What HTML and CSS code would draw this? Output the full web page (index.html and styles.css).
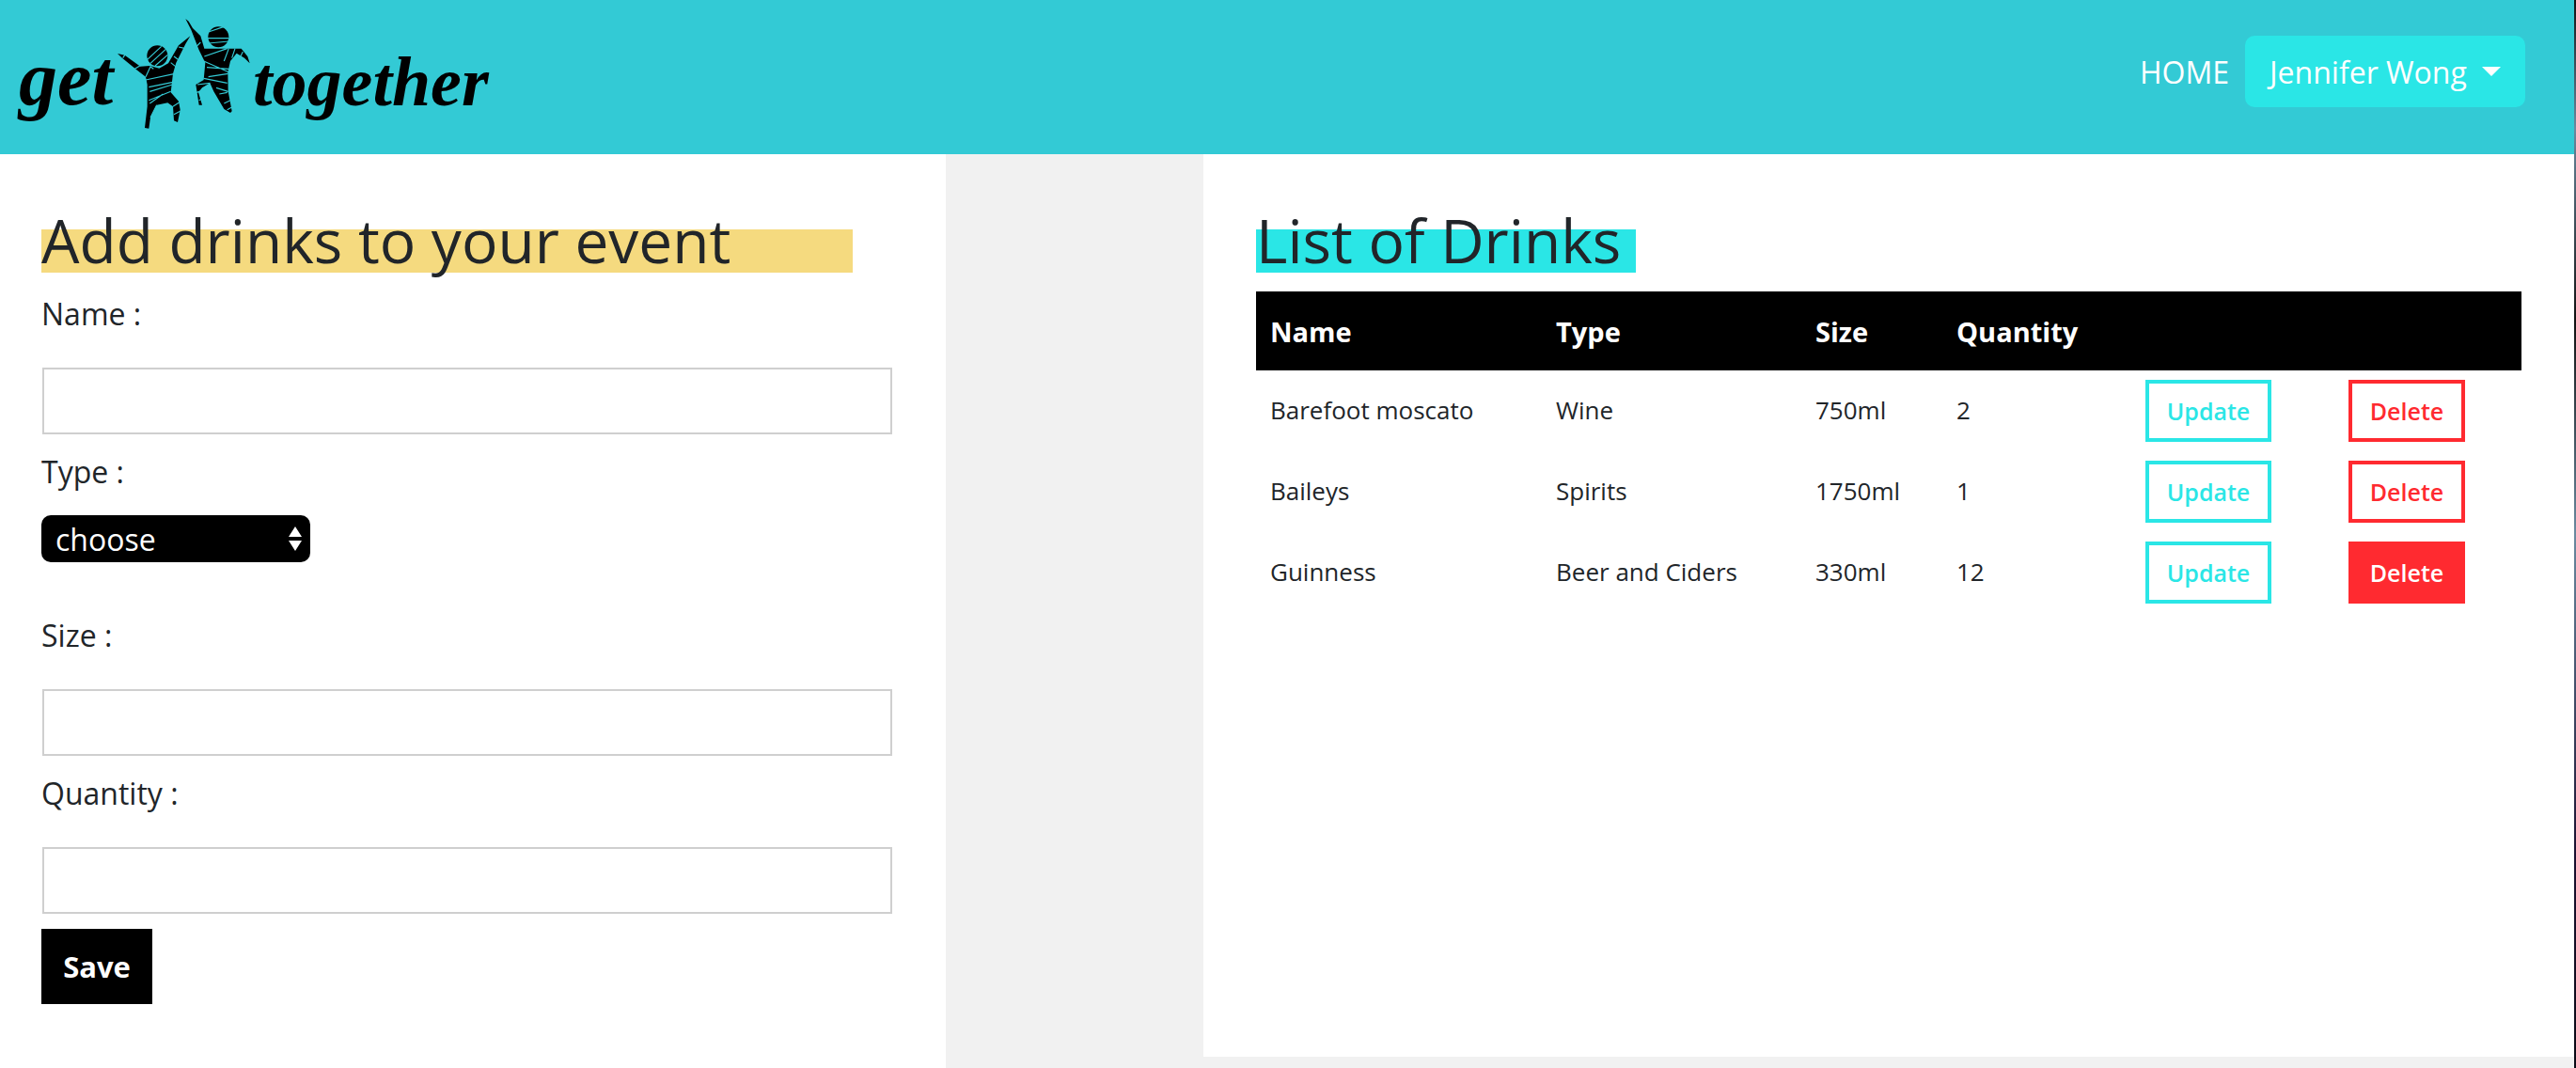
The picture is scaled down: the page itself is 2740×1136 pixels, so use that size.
FILE: index.html
```html
<!DOCTYPE html>
<html lang="en">
<head>
    <meta charset="UTF-8">
    <title>Get Together - Drinks</title>
    <link rel="stylesheet" href="styles.css">
</head>
<body>
    <div class="screen">
        <div class="app">
            <header class="topbar">
                <a class="logo" href="#home">
                    <span class="logo-word logo-get">get</span>
                    <svg class="logo-figures" viewBox="0 0 540 420" aria-hidden="true">
                        <g fill="#000">
                            <circle cx="172" cy="148" r="33"/>
                            <path d="M45 141 68 146 118 182 148 180 178 188 207 172 240 115 277 85 262 110 232 170 222 205 215 265 240 293 245 320 237 360 225 355 222 310 205 298 170 305 150 345 145 380 132 378 140 310 140 240 135 215 105 192 60 155Z"/>
                            <circle cx="367" cy="88" r="33"/>
                            <path d="M262 30 272 38 285 60 310 85 322 125 370 125 415 125 440 125 460 150 467 172 450 155 425 140 405 165 397 200 398 262 410 325 405 330 385 318 352 262 340 235 315 250 303 265 315 305 305 305 295 240 320 225 325 170 305 130 280 65Z"/>
                        </g>
                        <g class="logo-cuts">
                            <path d="M140 160 185 118M150 172 198 128M165 180 205 145"/>
                            <path d="M62 155 72 140M100 190 120 178M135 215 150 183 160 190"/>
                            <path d="M135 225 228 205M145 248 222 232M148 262 220 240M145 290 215 262M148 300 190 270M150 345 170 305M222 310 245 295M225 335 245 325"/>
                            <path d="M215 170 240 190M225 150 245 165M240 120 262 125"/>
                            <path d="M335 72 385 55M333 92 400 92M335 108 400 102"/>
                            <path d="M310 105 285 130M322 150 395 125M320 165 400 200M330 185 400 190M320 220 395 235M335 215 398 205"/>
                            <path d="M400 125 385 165M420 125 410 155M445 135 435 155M300 240 340 235M297 265 318 258M305 290 315 285"/>
                            <path d="M360 250 398 262M370 270 395 265M385 300 405 290M395 320 410 312"/>
                        </g>
                    </svg>
                    <span class="logo-word logo-together">together</span>
                </a>
                <nav class="topnav">
                    <a class="nav-link" href="#home">HOME</a>
                    <button class="user-btn" type="button">Jennifer Wong<span class="caret"></span></button>
                </nav>
            </header>

            <main class="content">
                <section class="panel-form">
                    <h1 class="title title-yellow">Add drinks to your event</h1>
                    <form>
                        <label class="field-label" for="name">Name :</label>
                        <input class="field-input" id="name" type="text">
                        <label class="field-label" for="type">Type :</label>
                        <div class="select-wrap">
                            <select class="field-select" id="type">
                                <option>choose</option>
                            </select>
                            <svg class="select-arrows" viewBox="0 0 14 26" aria-hidden="true">
                                <path d="M7 0 14 11H0ZM0 15H14L7 26Z" fill="#fff"/>
                            </svg>
                        </div>
                        <label class="field-label" for="size">Size :</label>
                        <input class="field-input" id="size" type="text">
                        <label class="field-label" for="quantity">Quantity :</label>
                        <input class="field-input" id="quantity" type="text">
                        <button class="save-btn" type="button">Save</button>
                    </form>
                </section>

                <section class="panel-list">
                    <h1 class="title title-cyan">List of Drinks</h1>
                    <table class="drinks">
                        <colgroup>
                            <col class="col-name">
                            <col class="col-type">
                            <col class="col-size">
                            <col class="col-qty">
                            <col class="col-update">
                            <col class="col-delete">
                        </colgroup>
                        <thead>
                            <tr>
                                <th>Name</th>
                                <th>Type</th>
                                <th>Size</th>
                                <th>Quantity</th>
                                <th></th>
                                <th></th>
                            </tr>
                        </thead>
                        <tbody>
                            <tr>
                                <td>Barefoot moscato</td>
                                <td>Wine</td>
                                <td>750ml</td>
                                <td>2</td>
                                <td><button class="btn-update" type="button">Update</button></td>
                                <td><button class="btn-delete" type="button">Delete</button></td>
                            </tr>
                            <tr>
                                <td>Baileys</td>
                                <td>Spirits</td>
                                <td>1750ml</td>
                                <td>1</td>
                                <td><button class="btn-update" type="button">Update</button></td>
                                <td><button class="btn-delete" type="button">Delete</button></td>
                            </tr>
                            <tr>
                                <td>Guinness</td>
                                <td>Beer and Ciders</td>
                                <td>330ml</td>
                                <td>12</td>
                                <td><button class="btn-update" type="button">Update</button></td>
                                <td><button class="btn-delete btn-delete-active" type="button">Delete</button></td>
                            </tr>
                        </tbody>
                    </table>
                </section>
            </main>
        </div>
        <div class="screen-edge"></div>
    </div>
</body>
</html>
```

FILE: styles.css
```css
* {
    box-sizing: border-box;
}
body {
    font-family: "Open Sans", "Noto Sans", sans-serif;
    margin: 0;
    padding: 0;
    background-color: #f1f1f1;
    color: #212529;
}
.screen {
    display: flex;
    height: 1136px;
    overflow: hidden;
}
.app {
    flex: 1;
    display: flex;
    flex-direction: column;
    min-width: 0;
}
.screen-edge {
    width: 2px;
    background: linear-gradient(#111 0%, #6a8aa0 12%, #111 30%, #6a8aa0 50%, #1a1030 80%, #0a0a14 100%);
}

/* top bar */
.topbar {
    display: flex;
    justify-content: space-between;
    align-items: center;
    height: 164px;
    padding: 0 52px 12px 20px;
    background-color: #33cad5;
}
.logo {
    display: flex;
    align-items: flex-start;
    height: 164px;
    margin-bottom: -12px;
    color: #000;
    text-decoration: none;
}
.logo-word {
    font-family: "Liberation Serif", serif;
    font-style: italic;
    font-weight: 700;
    font-size: 74px;
    line-height: 1;
    margin-top: 50px;
}
.logo-get {
    width: 90px;
    font-size: 82px;
    margin-top: 43px;
}
.logo-figures {
    flex: none;
    width: 180px;
    height: 140px;
    margin-top: 10px;
}
.logo-cuts {
    fill: none;
    stroke: #33cad5;
    stroke-width: 3.5;
}
.logo-together {
    margin-left: -21px;
}
.topnav {
    display: flex;
    align-items: center;
    gap: 17px;
}
.nav-link {
    color: #fff;
    font-size: 32px;
    text-decoration: none;
}
.user-btn {
    display: flex;
    align-items: center;
    height: 76px;
    width: 298px;
    padding: 0 26px;
    border: 0;
    border-radius: 10px;
    background-color: #2ae6e6;
    color: #fff;
    font-family: inherit;
    font-size: 32px;
}
.caret {
    margin-left: 16px;
    border-top: 10px solid #fff;
    border-left: 10px solid transparent;
    border-right: 10px solid transparent;
}

/* panels */
.content {
    flex: 1;
    display: flex;
}
.panel-form {
    width: 1006px;
    padding: 80px 58px 0 44px;
    background-color: #fff;
}
.panel-list {
    width: 1458px;
    height: 960px;
    margin-left: 274px;
    padding: 80px 56px 0 56px;
    background-color: #fff;
}
.title {
    height: 46px;
    margin: 0;
    font-size: 64px;
    font-weight: 400;
    line-height: 24px;
    white-space: nowrap;
}
.title-yellow {
    width: 863px;
    background-color: #f5da7f;
}
.title-cyan {
    width: 404px;
    background-color: #2ae6e6;
}

/* form */
.field-label {
    display: block;
    height: 44px;
    font-size: 32px;
    line-height: 44px;
}
.panel-form .title + form {
    margin-top: 22px;
}
.field-input {
    display: block;
    width: 904px;
    height: 71px;
    margin: 35px 0 18px 1px;
    border: 2px solid #cfcfcf;
    background-color: #fff;
}
.select-wrap {
    position: relative;
    width: 286px;
    height: 50px;
    margin: 24px 0 56px;
}
.field-select {
    display: block;
    width: 100%;
    height: 100%;
    padding: 0 15px;
    border: 0;
    border-radius: 10px;
    background-color: #000;
    color: #fff;
    font-family: inherit;
    font-size: 32px;
    appearance: none;
}
.select-arrows {
    position: absolute;
    top: 12px;
    right: 9px;
    width: 14px;
    height: 26px;
}
.save-btn {
    display: block;
    width: 118px;
    height: 80px;
    margin-top: -2px;
    border: 0;
    background-color: #000;
    color: #fff;
    font-family: inherit;
    font-size: 31px;
    font-weight: 700;
}

/* table */
.drinks {
    width: 1346px;
    margin-top: 20px;
    border-collapse: collapse;
    table-layout: fixed;
}
.col-name { width: 303px; }
.col-type { width: 276px; }
.col-size { width: 150px; }
.col-qty { width: 201px; }
.col-update { width: 216px; }
.col-delete { width: 200px; }
.drinks th {
    height: 84px;
    padding: 0 16px;
    background-color: #000;
    color: #fff;
    font-size: 29px;
    font-weight: 700;
    text-align: left;
}
.drinks th:first-child {
    padding-left: 15px;
}
.drinks td {
    height: 86px;
    padding: 0 16px 2px;
    font-size: 26px;
}
.drinks td:first-child {
    padding-left: 15px;
}
.drinks td:nth-child(n+5) {
    padding: 0 16px;
}
.btn-update,
.btn-delete {
    display: block;
    height: 66px;
    padding: 0;
    background-color: #fff;
    font-family: inherit;
    font-size: 25px;
    font-weight: 600;
}
.btn-update {
    width: 134px;
    border: 4px solid #2ae6e6;
    color: #2ae6e6;
}
.btn-delete {
    width: 124px;
    border: 4px solid #ff2a30;
    color: #ff2a30;
}
.btn-delete-active {
    background-color: #ff2a30;
    color: #fff;
}
```
